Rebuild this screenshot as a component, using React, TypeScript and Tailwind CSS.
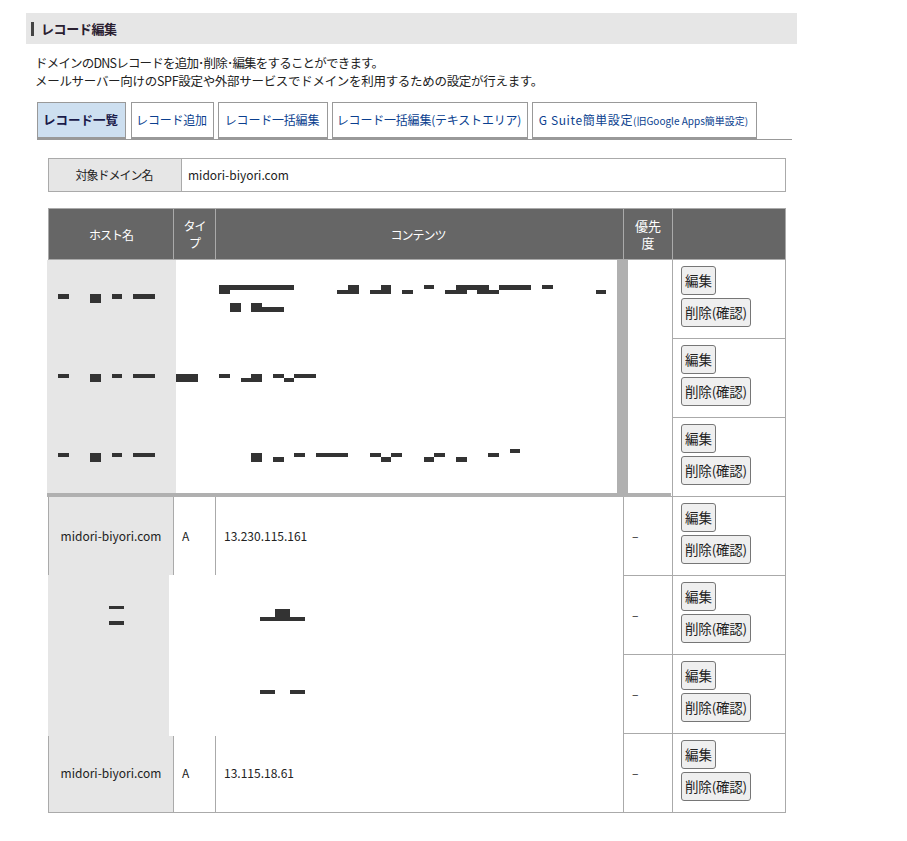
import { Fragment } from "react";

type Rect = [number, number, number, number];

// redaction marks, in page coordinates
const marks: Rect[] = [
  [58, 294, 11, 5], [90, 294, 11, 9], [112, 294, 10, 5], [133, 294, 22, 5],
  [219, 285, 75, 5], [219, 290, 11, 4], [230, 303, 11, 9], [251, 303, 11, 9], [262, 307, 22, 5],
  [337, 290, 22, 4], [348, 285, 11, 5], [370, 290, 21, 4], [381, 285, 10, 5], [402, 290, 11, 4],
  [424, 285, 10, 4], [445, 290, 22, 4], [456, 285, 33, 5], [477, 290, 22, 4], [499, 285, 32, 5],
  [542, 285, 11, 4], [596, 290, 10, 4],
  [58, 374, 11, 4], [90, 374, 11, 8], [112, 374, 10, 4], [133, 374, 22, 4], [176, 374, 22, 8],
  [219, 374, 11, 4], [241, 378, 10, 4], [251, 374, 11, 8], [273, 374, 11, 4], [284, 378, 10, 4], [294, 374, 22, 4],
  [58, 453, 11, 4], [90, 453, 11, 9], [112, 453, 10, 4], [133, 453, 22, 4],
  [251, 453, 11, 9], [273, 457, 11, 5], [294, 453, 11, 4], [316, 453, 32, 4],
  [370, 453, 11, 4], [381, 457, 10, 5], [391, 453, 11, 4], [424, 457, 10, 5], [434, 453, 11, 4],
  [456, 457, 11, 5], [488, 453, 11, 4], [510, 449, 10, 4],
  [109, 606, 15, 3], [109, 621, 15, 4], [260, 617, 45, 4], [275, 609, 15, 8],
  [260, 690, 15, 4], [290, 690, 15, 4],
];

const font = "font-['Noto_Sans_CJK_JP','Liberation_Sans',sans-serif]";

const rows = [
  { host: "", type: "", content: "", prio: "" },
  { host: "", type: "", content: "", prio: "" },
  { host: "", type: "", content: "", prio: "" },
  { host: "midori-biyori.com", type: "A", content: "13.230.115.161", prio: "–" },
  { host: "", type: "", content: "", prio: "–" },
  { host: "", type: "", content: "", prio: "–" },
  { host: "midori-biyori.com", type: "A", content: "13.115.18.61", prio: "–" },
];

function Tab({ label, className, active }: { label: React.ReactNode; className: string; active?: boolean }) {
  return (
    <a
      className={`flex h-[37px] items-center justify-center border border-b-2 border-[#999999] pr-[2px] whitespace-nowrap ${className} ${
        active ? "bg-[#cddff0] text-[12.5px] font-bold text-[#1a1a4a]" : "bg-white text-[12px] tracking-[-0.2px] text-[#0b3f8f]"
      }`}
    >
      {label}
    </a>
  );
}

function RowButtons() {
  return (
    <div className="flex flex-col items-start gap-[3px] pb-[6px] pl-2">
      <button className="h-[29px] w-[35px] rounded-[3px] border border-[#767676] bg-[#efefef] text-[13.5px] whitespace-nowrap text-[#222222]">
        編集
      </button>
      <button className="h-[29px] w-[70px] rounded-[3px] border border-[#767676] bg-[#efefef] text-[13.5px] tracking-[-0.2px] whitespace-nowrap text-[#222222]">
        削除(確認)
      </button>
    </div>
  );
}

export default function App() {
  return (
    <div className={`relative h-[841px] w-[907px] overflow-hidden bg-white pt-[13px] text-[#222222] ${font}`}>
      <div className="ml-[26px] flex h-[31px] w-[771px] items-center bg-[#e6e6e6] pl-[5px]">
        <span className="mr-[7px] h-[14px] w-[3px] bg-[#444444]" />
        <h1 className="text-[13px] font-bold tracking-[-0.4px] text-[#2a2030]">レコード編集</h1>
      </div>

      <p className="mt-[10px] ml-[35px] text-[12.5px] leading-[18px] tracking-[-0.3px]">
        <span className="tracking-[-0.8px]">ドメインのDNSレコードを追加･削除･編集をすることができます。</span>
        <br />
        メールサーバー向けのSPF設定や外部サービスでドメインを利用するための設定が行えます。
      </p>

      <nav className="mt-[12px] ml-[37px] flex h-[38px] w-[755px] gap-[4px] border-b border-[#999999]">
        <Tab active className="w-[89px]" label="レコード一覧" />
        <Tab className="ml-[1px] w-[83px]" label="レコード追加" />
        <Tab className="w-[110px]" label="レコード一括編集" />
        <Tab className="w-[196px]" label="レコード一括編集(テキストエリア)" />
        <Tab
          className="w-[225px]"
          label={
            <Fragment>
              <span className="tracking-[0.6px]">G Suite簡単設定</span>
              <span className="text-[10px] tracking-normal">(旧Google Apps簡単設定)</span>
            </Fragment>
          }
        />
      </nav>

      <table className="mt-[18px] ml-[48px] h-[34px] w-[738px] table-fixed text-[12px]">
        <tbody>
          <tr>
            <th className="w-[133px] border border-[#aaaaaa] bg-[#e6e6e6] pr-[2px] font-normal tracking-[-1px]">対象ドメイン名</th>
            <td className="border border-[#aaaaaa] pl-[6px]">midori-biyori.com</td>
          </tr>
        </tbody>
      </table>

      <div className="relative mt-[16px] ml-[48px] w-[738px]">
        <table className="w-[737px] table-fixed text-[12px]">
          <colgroup>
            <col className="w-[125px]" />
            <col className="w-[42px]" />
            <col className="w-[408px]" />
            <col className="w-[49px]" />
            <col className="w-[113px]" />
          </colgroup>
          <thead>
            <tr className="h-[51px] bg-[#666666] leading-[17px] text-white">
              <th className="border border-[#aaaaaa] font-normal tracking-[-1px]">ホスト名</th>
              <th className="border border-[#aaaaaa] px-[7px] font-normal tracking-[-1px]">タイプ</th>
              <th className="border border-[#aaaaaa] pr-[3px] font-normal tracking-[-1px]">コンテンツ</th>
              <th className="border border-[#aaaaaa] px-2 text-[13px] font-normal">優先度</th>
              <th className="border border-[#aaaaaa]" />
            </tr>
          </thead>
          <tbody>
            {rows.map((row, i) => (
              <tr key={i} className="h-[79px]">
                <td className="border border-[#aaaaaa] bg-[#e6e6e6] text-center">{row.host}</td>
                <td className="border border-[#aaaaaa] pl-2">{row.type}</td>
                <td className="border border-[#aaaaaa] pl-2">{row.content}</td>
                <td className="border border-[#aaaaaa] pl-2">{row.prio}</td>
                <td className="border border-[#aaaaaa]">
                  <RowButtons />
                </td>
              </tr>
            ))}
          </tbody>
        </table>

        {/* masked rows painted over the table */}
        <div className="absolute top-[52px] left-[-1px] h-[233px] w-[129px] bg-[#e6e6e6]" />
        <div className="absolute top-[52px] left-[128px] h-[233px] w-[441px] bg-white" />
        <div className="absolute top-[52px] left-[569px] h-[233px] w-[11px] bg-[#b0b0b0]" />
        <div className="absolute top-[52px] left-[580px] h-[233px] w-[44px] bg-white" />
        <div className="absolute top-[285px] left-[-1px] h-[4px] w-[624px] bg-[#b0b0b0]" />
        <div className="absolute top-[367px] left-0 h-[161px] w-[121px] bg-[#e6e6e6]" />
        <div className="absolute top-[367px] left-[121px] h-[161px] w-[454px] bg-white" />
      </div>

      <svg className="pointer-events-none absolute top-0 left-0" width="907" height="841">
        {marks.map(([x, y, w, h], i) => (
          <rect key={i} x={x} y={y} width={w} height={h} fill="#333333" />
        ))}
      </svg>
    </div>
  );
}
